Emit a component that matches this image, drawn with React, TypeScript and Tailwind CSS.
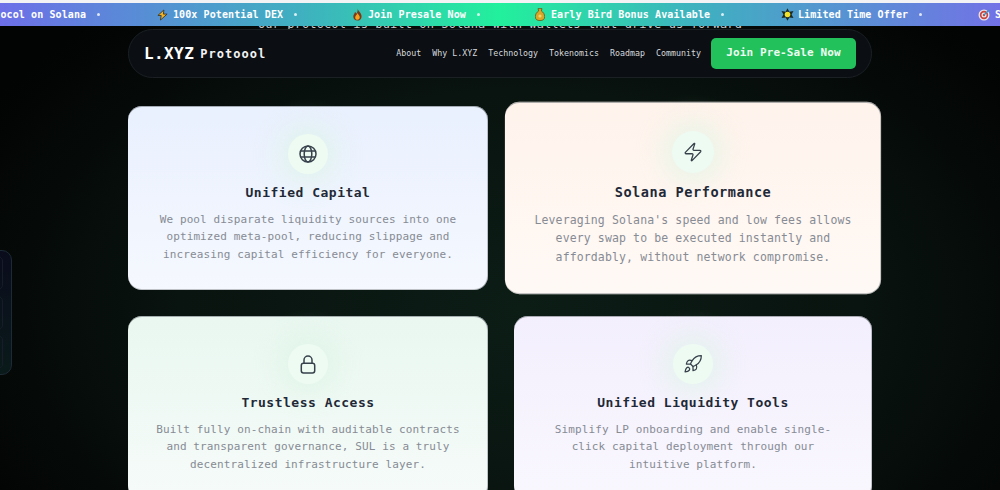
import { Zap, Rocket } from "lucide-react";
import type { ReactNode } from "react";

const mono = "font-['DejaVu_Sans_Mono','Liberation_Mono',monospace]";

const Bolt = () => (
  <svg width="11" height="12" viewBox="0 0 12 12">
    <path d="M7.5 .5 1 6.5h3.6L3.8 11.5 11 5H7z" fill="#f5b324" stroke="#3a3a2c" strokeWidth="1" strokeLinejoin="round" />
  </svg>
);
const Fire = () => (
  <svg width="9" height="13" viewBox="0 0 9 13">
    <path d="M4.6 .4C5 3 8.6 4.6 8.6 8.4c0 2.6-1.9 4.2-4.2 4.2S.3 11 .3 8.5C.3 6.5 1.6 5.7 2 4c.8.4 1.2 1 1.3 1.7C4.4 4.300 4.900 2.300 4.600.4z" fill="#7a3a1a" />
    <path d="M4.500 5c.3 1.500 2.300 2.300 2.300 4.300 0 1.500-1 2.400-2.300 2.400S2.200 10.800 2.200 9.400C2.200 7.800 4 7 4.500 5z" fill="#f7a21f" />
  </svg>
);
const Bag = () => (
  <svg width="10" height="13" viewBox="0 0 10 13">
    <path d="M3 .6h4L6.300 3c2.200 1.200 3.400 3.500 3.400 5.700 0 2.600-1.800 3.900-4.700 3.900S.3 11.300.3 8.700C.3 6.500 1.500 4.200 3.700 3z" fill="#d8a72a" stroke="#5b4a16" strokeWidth=".7" />
    <circle cx="5" cy="8" r="1.600" fill="#f3d669" />
  </svg>
);
const Star = () => (
  <svg width="13" height="13" viewBox="0 0 13 13">
    <path d="M6.500 .3 8.300 3.700 12.500 3l-1.900 3.500 1.900 3.500-4.200-.6L6.500 12.700 4.700 9.400.5 10l1.900-3.500L.5 3l4.200.7z" fill="#1d2a24" />
    <circle cx="6.500" cy="6.500" r="2.800" fill="#f2e22c" />
  </svg>
);
const Target = () => (
  <svg width="12" height="12" viewBox="0 0 12 12">
    <circle cx="6" cy="6" r="5.500" fill="#e9e4ea" />
    <circle cx="6" cy="6" r="4.200" fill="#c9453d" />
    <circle cx="6" cy="6" r="2.500" fill="#ece6e8" />
    <circle cx="6" cy="6" r="1.200" fill="#c9453d" />
    <path d="M6 6 11 1" stroke="#3f8fc0" strokeWidth="1.200" />
  </svg>
);

const GlobeIcon = () => (
  <svg width="18" height="18" viewBox="0 0 18 18" fill="none" stroke="currentColor" strokeWidth="1.500">
    <circle cx="9" cy="9" r="8" />
    <ellipse cx="9" cy="9" rx="3.800" ry="8" />
    <path d="M1.800 6h14.400M1.800 12h14.400" />
  </svg>
);
const LockIcon = () => (
  <svg width="16" height="19" viewBox="0 0 16 19" fill="none" stroke="currentColor" strokeWidth="1.500" strokeLinecap="round">
    <rect x="1.300" y="8.300" width="13.400" height="9.700" rx="2.200" />
    <path d="M4 8.300V5a4 4 0 0 1 8 0v3.300" />
  </svg>
);

const Dot = () => <span className="ml-[11px] w-[3px] h-[3px] bg-white/80 rounded-full shrink-0" />;

function Tick({ icon, text, className }: { icon?: ReactNode; text: string; className: string }) {
  return (
    <div className={`flex items-center shrink-0 ${className}`}>
      {icon && <span className="w-[14px] flex justify-center mr-[4px]">{icon}</span>}
      <span>{text}</span>
      <Dot />
    </div>
  );
}

function Card({ icon, title, lines, className }: { icon: ReactNode; title: string; lines: string[]; className: string }) {
  return (
    <div className={`h-[184px] rounded-[14px] flex flex-col items-center pt-[28px] shadow-[inset_0_1px_0_0_rgba(110,115,120,0.55),inset_-1px_0_0_0_rgba(110,115,120,0.4),inset_0_-1px_0_0_rgba(110,115,120,0.4)] ${className}`}>
      <div className="w-[40px] h-[40px] rounded-full bg-[#eefbf2] flex items-center justify-center text-[#37414c] shadow-[0_0_24px_12px_rgba(215,245,225,0.45)]">
        {icon}
      </div>
      <h3 className="mt-[11px] text-[13px] leading-[16px] font-bold tracking-[0.5px] text-[#1f2937]">{title}</h3>
      <div className="mt-[10px] text-[11px] leading-[17.300px] tracking-[0.120px] text-[#868b94] text-center">
        {lines.map((l) => (
          <p key={l} className="whitespace-nowrap">{l}</p>
        ))}
      </div>
    </div>
  );
}

export default function App() {
  return (
    <div className={`${mono} relative w-[1000px] h-[490px] overflow-hidden bg-[radial-gradient(ellipse_620px_400px_at_520px_310px,#0c1d16_0%,#09130f_55%,#020303_100%)]`}>
      <div className="h-[3px] bg-[#f3f3f6]" />
      <div className="h-[23px] flex items-center overflow-hidden text-[10px] font-bold tracking-[0.100px] text-white bg-[linear-gradient(90deg,#6d6fe8_0%,#3fb0c0_30%,#22f09c_50%,#3fb0c0_70%,#7272e6_100%)]">
        <Tick text="Protocol on Solana" className="-ml-[24px] w-[179px]" />
        <Tick icon={<Bolt />} text="100x Potential DEX" className="w-[195px]" />
        <Tick icon={<Fire />} text="Join Presale Now" className="w-[183px]" />
        <Tick icon={<Bag />} text="Early Bird Bonus Available" className="w-[247px]" />
        <Tick icon={<Star />} text="Limited Time Offer" className="w-[197px]" />
        <Tick icon={<Target />} text="Special" className="w-[100px]" />
      </div>

      <div className="h-[3px] overflow-hidden flex justify-center">
        <p className="-mt-[9px] text-[12px] leading-[14px] text-[#c7cbd0] whitespace-nowrap tracking-[0.110px]">Our protocol is built on Solana with wallets that drive us forward</p>
      </div>

      <nav className="mx-[128px] h-[49px] rounded-full border border-[#1a2024] bg-[#0b0e13] flex items-center pl-[15px] pr-[15px]">
        <span className="text-[16px] font-bold tracking-[0.400px] text-white">L.XYZ</span>
        <span className="ml-[6px] text-[12px] font-bold tracking-[1.050px] text-[#f1f3f4]">Protoool</span>
        <div className="ml-auto flex items-center gap-[11px] text-[8.300px] tracking-[0px] text-[#d5d9dc]">
          <a>About</a>
          <a>Why L.XYZ</a>
          <a>Technology</a>
          <a>Tokenomics</a>
          <a>Roadmap</a>
          <a>Community</a>
        </div>
        <button className="ml-[10px] w-[145px] h-[31px] rounded-[5px] bg-[#22c15b] text-[11px] font-bold text-[#eefbf2] tracking-[0.100px]">Join Pre-Sale Now</button>
      </nav>

      <main className="mx-[128px] mt-[28px] grid grid-cols-2 gap-x-[24px] gap-y-[26px]">
        <Card
          className="bg-[linear-gradient(180deg,#e9f0fe_0%,#f5f8fe_100%)]"
          icon={<GlobeIcon />}
          title="Unified Capital"
          lines={["We pool disparate liquidity sources into one", "optimized meta-pool, reducing slippage and", "increasing capital efficiency for everyone."]}
        />
        <Card
          className="scale-[1.045] translate-x-[1px] bg-[linear-gradient(180deg,#fff3ec_0%,#fff9f5_100%)]"
          icon={<Zap size={20} strokeWidth={1.500} />}
          title="Solana Performance"
          lines={["Leveraging Solana's speed and low fees allows", "every swap to be executed instantly and", "affordably, without network compromise."]}
        />
        <Card
          className="bg-[linear-gradient(180deg,#e9f7f0_0%,#f6fbf9_100%)]"
          icon={<LockIcon />}
          title="Trustless Access"
          lines={["Built fully on-chain with auditable contracts", "and transparent governance, SUL is a truly", "decentralized infrastructure layer."]}
        />
        <Card
          className="ml-[2px] bg-[linear-gradient(180deg,#f3effd_0%,#f9f7fe_100%)]"
          icon={<Rocket size={20} strokeWidth={1.500} />}
          title="Unified Liquidity Tools"
          lines={["Simplify LP onboarding and enable single-", "click capital deployment through our", "intuitive platform."]}
        />
      </main>

      <aside className="absolute left-[-30px] top-[250px] w-[42px] h-[125px] rounded-[10px] border border-[#1c2a35] bg-[linear-gradient(180deg,#0a0c1c_0%,#0a1a1a_100%)] flex flex-col justify-between py-[5px] items-end pr-[8px]">
        <span className="w-[10px] h-[34px] rounded-r-[5px] border border-[#161d28]" />
        <span className="w-[10px] h-[34px] rounded-r-[5px] border border-[#161d28]" />
        <span className="w-[10px] h-[34px] rounded-r-[5px] border border-[#161d28]" />
      </aside>
    </div>
  );
}
